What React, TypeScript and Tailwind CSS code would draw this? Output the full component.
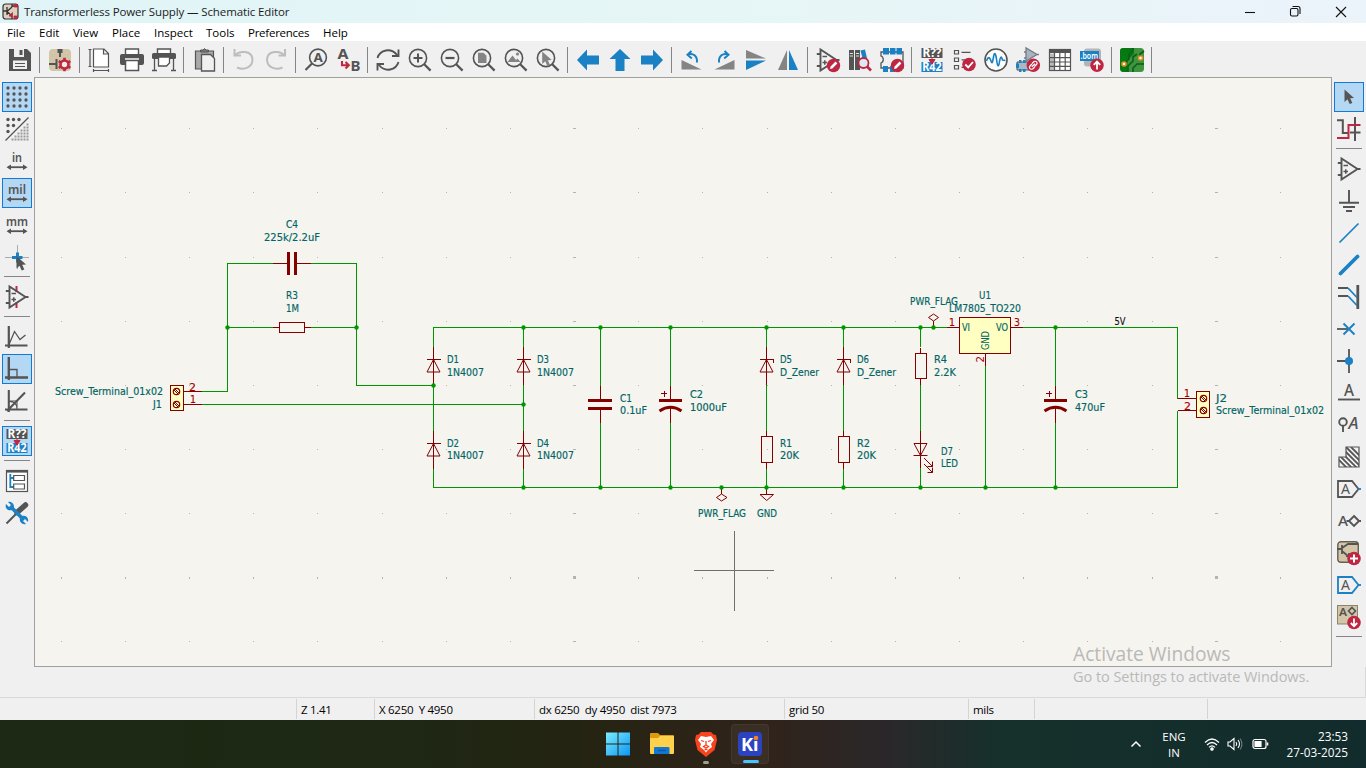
import type { ReactNode } from "react";

const K = "#545454";
const B = "#1a81c4";
const R = "#bf2641";
const G = "#848484";
const CREAM = "#d2c5a8";

const Svg = ({ children, size = 24 }: { children: ReactNode; size?: number }) => (
  <svg className="overflow-visible" width={size} height={size} viewBox="0 0 24 24" fill="none" stroke={K} strokeWidth="1.6">
    {children}
  </svg>
);

const Label = ({ x, y, s, w, fill = K, weight = 600, children }: { x: number; y: number; s: number; w: number; fill?: string; weight?: number; children: string }) => (
  <text x={x} y={y} fontSize={s} textLength={w} lengthAdjust="spacingAndGlyphs" fontWeight={weight} fontFamily="'Noto Sans', sans-serif" fill={fill} stroke="none">
    {children}
  </text>
);

const Lens = ({ children }: { children?: ReactNode }) => (
  <Svg>
    <circle cx="10" cy="10" r="8.6" />
    <path d="M16.2 16.2L22.6 22.6" strokeWidth="2.2" />
    {children}
  </Svg>
);

const OpAmp = () => (
  <>
    <path d="M4.5 1.5V22.5L20.5 12Z M0.8 6H4.5M0.8 18H4.5M20 12H23.5" strokeWidth="1.9" />
    <path d="M6.5 8.5H11M6.5 14.5H11M8.75 12.2V16.8" strokeWidth="1.5" />
  </>
);

const Pencil = () => (
  <>
    <circle cx="17.5" cy="17.5" r="6.7" fill={R} stroke="none" />
    <path d="M14 21L14.6 18.6L19.5 13.5L21.4 15.4L16.4 20.4Z" fill="#fff" stroke="none" />
  </>
);

const Annotate = () => (
  <Svg>
    <rect x="1.5" y="0" width="21" height="10" fill={K} stroke="none" />
    <rect x="1.5" y="14" width="21" height="10" fill={B} stroke="none" />
    <Label x={2.5} y={9} s={11.5} w={19} fill="#fff" weight={700}>R??</Label>
    <Label x={2.2} y={23.2} s={11.5} w={19.5} fill="#fff" weight={700}>R42</Label>
    <path d="M12 9V12M9 11.500H15L12 16.300Z" fill={R} stroke={R} strokeWidth="1" />
  </Svg>
);

const Cursor = ({ x = 0, y = 0, fill = K }: { x?: number; y?: number; fill?: string }) => (
  <path transform={`translate(${x} ${y})`} d="M0 0V12.5L3 9.8L5.2 14.6L7.8 13.5L5.7 8.8L9.500 8.600Z" fill={fill} stroke="none" />
);

const topIcons: (ReactNode | null)[] = [
  <Svg key="save">
    <path d="M1 1H19L23 5V23H1Z" fill={K} stroke="none" />
    <rect x="6" y="1" width="10" height="8" fill="#efefef" stroke="none" />
    <rect x="11.5" y="2" width="3" height="5" fill={K} stroke="none" />
    <path d="M5 12.5H19V21H5Z" fill="#efefef" stroke="none" />
    <path d="M7 15.5H17M7 18.5H17" strokeWidth="1.2" />
  </Svg>,
  null,
  <Svg key="setup">
    <rect x="1" y="1" width="22" height="22" rx="4" fill={CREAM} stroke="none" />
    <path d="M9.5 1H14.5V5H9.500Z" fill={K} stroke="none" />
    <path d="M12 4V9M1 16H8M8.500 11V21" strokeWidth="2" />
    <circle cx="16.500" cy="16.500" r="4" stroke={R} strokeWidth="2.600" fill="#f3ebe4" />
    <path d="M16.5 9.8V12.500M16.500 20.500V23.200M10.700 13.100L13 14.500M20 18.500L22.300 19.900M10.700 19.900L13 18.500M20 14.500L22.300 13.100" stroke={R} strokeWidth="2.600" />
  </Svg>,
  null,
  <Svg key="page">
    <path d="M5.500 1H16L20.500 5.500V19H5.500Z M15.500 1V6H20.500" fill="#fff" strokeWidth="1.200" />
    <path d="M2 1V19M0.500 1.500H3.500M0.500 18.500H3.500M5.500 22.500H20.500M5.500 21V24M20.500 21V24" strokeWidth="1.200" />
  </Svg>,
  <Svg key="print">
    <path d="M5.5 6V1H18.5V6" fill="#fff" strokeWidth="1.4" />
    <rect x="0" y="6" width="24" height="11" rx="2" fill={K} stroke="none" />
    <rect x="5.5" y="12.5" width="13" height="10" fill="#fff" strokeWidth="1.5" />
    <path d="M5 11H19" stroke="#efefef" />
  </Svg>,
  <Svg key="plot">
    <path d="M5.5 5V1H18.5V5" fill="#fff" strokeWidth="1.4" />
    <rect x="0" y="5" width="24" height="6" rx="1.5" fill={K} stroke="none" />
    <path d="M6.5 9H17.5V15L14.5 18H6.5Z" fill="#fff" strokeWidth="1.3" />
    <path d="M2.5 11V22M21.5 11V22M0 22.5H5M19 22.5H24" strokeWidth="1.3" />
  </Svg>,
  null,
  <Svg key="paste">
    <g transform="translate(1.500 0)">
      <path d="M2 3H20V21H2Z" fill="#a9a9a9" strokeWidth="1.2" />
      <path d="M7 4V2H9.5L11 .5L12.5 2H15V4Z" fill="#777" strokeWidth="1" />
      <path d="M8 6.5H17L21 10.5V23H8Z" fill="#f0f0f0" strokeWidth="1.3" />
    </g>
  </Svg>,
  null,
  <Svg key="undo"><path d="M2.500 1V7.500H9M3 7.500C7 2.500 20 2 20.500 11.500C20.500 18.500 13 23 5 19.500" stroke="#bdbdbd" strokeWidth="2" /></Svg>,
  <Svg key="redo"><path d="M21 1V7.500H14.500M20.500 7.500C16.500 2.500 3.500 2 3 11.500C3 18.500 10.500 23 18.500 19.500" stroke="#bdbdbd" strokeWidth="2" /></Svg>,
  null,
  <Svg key="find">
    <circle cx="14" cy="9.5" r="8.4" />
    <path d="M8 15.5L1.5 22" strokeWidth="2.2" />
    <Label x={9.4} y={14} s={12.5} w={9.3} weight={700}>A</Label>
  </Svg>,
  <Svg key="replace">
    <Label x={1.5} y={11} s={14.5} w={11} weight={700}>A</Label>
    <Label x={14.500} y={23} s={14.5} w={10} weight={700}>B</Label>
    <path d="M6 13V17.300H12M9.500 14L12.800 17.300L9.500 20.600" stroke={R} strokeWidth="2.100" />
  </Svg>,
  null,
  <Svg key="refresh"><path d="M1.5 10C4 1.5 15 -.5 21 7M22.5 1.5V8H16M22.5 14C20 22.5 9 24.5 3 17M1.5 22.5V16H8" strokeWidth="1.9" /></Svg>,
  <Lens key="zin"><path d="M5.5 10H14.5M10 5.5V14.5" strokeWidth="2" /></Lens>,
  <Lens key="zout"><path d="M5.5 10H14.5" strokeWidth="2.2" /></Lens>,
  <Lens key="zpage"><path d="M6 4.8H11.5L14.5 7.8V15H6Z" fill={G} stroke="none" /></Lens>,
  <Lens key="zobj"><path d="M3.5 14L8.5 7.5L12 12L13.5 10.5L16.5 14Z" fill={G} stroke="none" /><circle cx="13.5" cy="6" r="1.6" fill={G} stroke="none" /></Lens>,
  <Lens key="zsel"><Cursor x={6.2} y={3.500} fill={G} /></Lens>,
  null,
  <Svg key="left"><path d="M1 12L11 1.5V7.5H23V16.5H11V22.5Z" fill={B} stroke="none" /></Svg>,
  <Svg key="up"><path d="M12 1L22.5 11H16.5V23H7.5V11H1.5Z" fill={B} stroke="none" /></Svg>,
  <Svg key="right"><path d="M23 12L13 1.5V7.5H1V16.5H13V22.5Z" fill={B} stroke="none" /></Svg>,
  null,
  <Svg key="ccw"><path d="M1.500 12V21.500H21.500Z" fill={G} stroke="none" /><path d="M8 6.500C13 4.500 17.500 8 17 14.500M11.500 3L7.500 6.800L11.800 10.500" stroke={B} strokeWidth="2" /></Svg>,
  <Svg key="cw"><path d="M22.500 12V21.500H2.500Z" fill={G} stroke="none" /><path d="M16 6.500C11 4.500 6.500 8 7 14.500M12.500 3L16.500 6.800L12.200 10.500" stroke={B} strokeWidth="2" /></Svg>,
  <Svg key="mv"><path d="M2 2L22 10.5H2Z" fill={G} stroke="none" /><path d="M2 22L22 12.5H2Z" fill={B} stroke="none" /></Svg>,
  <Svg key="mh"><path d="M2 22H11V2Z" fill={G} stroke="none" /><path d="M22 22H13V2Z" fill={B} stroke="none" /></Svg>,
  null,
  <Svg key="symedit"><OpAmp /><Pencil /></Svg>,
  <Svg key="lib">
    <path d="M1 2H6V22H1ZM7 2H12V22H7Z" fill={K} stroke="none" />
    <path d="M1.8 5.5H5M1.8 8H5M8 5.5H11.2M8 8H11.2" stroke="#ddd" strokeWidth="1" />
    <path d="M12.5 2.5L17 1.5L21 19L17 20Z" fill={B} stroke="none" />
    <circle cx="15.5" cy="15" r="5" fill="#dce9f2" stroke={R} strokeWidth="1.8" />
    <path d="M19 18.5L23 22.5" stroke={R} strokeWidth="2.6" />
  </Svg>,
  <Svg key="fpedit">
    <path d="M1 4H23V20H1V15C4 14 4 9 1 8Z" strokeWidth="1.3" />
    <path d="M3 0H9V6.500H3ZM10 0H15.500V6.500H10ZM16.500 0H22V6.500H16.500ZM3 18H8V24H3ZM10 18H15V24H10Z" fill={B} stroke="none" />
    <Pencil />
  </Svg>,
  null,
  <Annotate key="ann" />,
  <Svg key="erc">
    <path d="M2.500 2.500H6.500V6H2.500ZM2.500 10H6.500V13.500H2.500ZM2.500 17.500H6.500V21H2.500ZM9.500 4.300H18.500M9.500 11.800H14M9.500 19.300H12" strokeWidth="1.2" />
    <circle cx="17" cy="16.500" r="6.800" fill={R} stroke="none" />
    <path d="M13.300 16.500L16.200 19.400L21 14" stroke="#fff" strokeWidth="1.8" />
  </Svg>,
  <Svg key="sim">
    <circle cx="12" cy="12" r="11" fill="#fff" />
    <path d="M2.500 13C4 8.500 5.500 8.500 7 13C8 16 8.500 15 9.500 9C10.500 3.500 11.500 5 12.500 11C13.500 19 14.500 20 15.500 13.500C16.500 8 17.500 8 18.500 12L21.500 12.500" stroke={B} strokeWidth="1.6" />
  </Svg>,
  <Svg key="assign">
    <path d="M10 0V13L21 6.5Z M8 4H10M8 10H10M20 6.5H23" fill="#a6b3c0" stroke="#747b82" strokeWidth="1.3" />
    <path d="M1 14H14V22H1Z" fill="#a9b7c6" strokeWidth="1" />
    <path d="M3 12H5.5V15H3ZM7 12H9.5V15H7ZM3 21H5.5V24H3ZM7 21H9.5V24H7ZM0 15.5H3V20H0Z" fill={B} stroke="none" />
    <circle cx="17.3" cy="17.3" r="6.7" fill={R} stroke="none" />
    <path d="M16 15.5L18 13.5C20.5 12.5 22 15 20.5 16.5L18.5 18.5M18.7 19L16.7 21C14 22 12.5 19.5 14 18L16 16M15.8 18.8L19 15.7" stroke="#fff" strokeWidth="1.2" />
  </Svg>,
  <Svg key="table">
    <rect x="1.5" y="1.5" width="21" height="21" fill="#fff" strokeWidth="1.2" />
    <path d="M1.5 1.5H22.5V5H1.5Z" fill={K} stroke="none" />
    <path d="M2 5.5H6V22H2Z" fill="#bbb" stroke="none" />
    <path d="M1.5 9.7H22.5M1.5 14H22.5M1.5 18.3H22.5M6.5 5V22M11.8 5V22M17.2 5V22" strokeWidth="1.2" />
  </Svg>,
  <Svg key="bom">
    <rect x="4" y="0.5" width="17" height="18" rx="3" fill="#b5b5b5" stroke="none" />
    <rect x="0" y="3" width="19" height="10" fill={B} stroke="none" />
    <Label x={0.5} y={11} s={9} w={17.5} fill="#fff">.bom</Label>
    <circle cx="17" cy="17.3" r="6.7" fill={R} stroke="none" />
    <path d="M17 21.5V14M13.8 16.8L17 13.5L20.2 16.8" stroke="#fff" strokeWidth="1.8" />
  </Svg>,
  null,
  <Svg key="pcb">
    <rect x="0" y="0" width="24" height="24" rx="3.5" fill="#3f9440" stroke="none" />
    <path d="M3.5 0H14V6L7.5 12V24H3.5C1 24 0 22 0 20V3C0 1 1 0 3.5 0Z" fill="#067a12" stroke="none" />
    <path d="M5 15L9 11V6L13 2V0M8 24V18L13 13V9L17 6M13 24V20L17 16H24M20 9V6L24 3" stroke="#0b5f16" strokeWidth="1.6" />
    <circle cx="4" cy="16" r="2" fill="#fff" stroke="#ef8d1c" strokeWidth="1.6" />
    <circle cx="20.5" cy="10" r="2" fill="#fff" stroke="#ef8d1c" strokeWidth="1.6" />
  </Svg>,
  null,
];

const dots = (xs: number[], ys: number[], r: number, keep: (x: number, y: number) => boolean = () => true) =>
  xs.flatMap((x) => ys.filter((y) => keep(x, y)).map((y) => <circle key={`${x}-${y}`} cx={x} cy={y} r={r} fill={K} stroke="none" />));

const Unit = ({ t, x, w }: { t: string; x: number; w: number }) => (
  <Svg>
    <Label x={x} y={13} s={13.2} w={w}>{t}</Label>
    <path d="M3 18.2H21" strokeWidth="1.8" />
    <path d="M1.5 18.2L6 15.400V21ZM22.5 18.200L18 15.400V21Z" fill={K} stroke="none" />
  </Svg>
);

type Side = { icon: ReactNode; on?: boolean } | null;

const leftIcons: Side[] = [
  { icon: <Svg>{dots([3, 9, 15, 21], [3, 9, 15, 21], 1.65)}</Svg>, on: true },
  {
    icon: (
      <Svg>
        {dots([3, 8.5, 14], [2.5, 8.5, 14.5], 1.7, (x, y) => x + y < 20)}
        <path d="M.5 23.5L23.5 .5" strokeWidth="1.2" />
        {[0, 1, 2, 3, 4, 5].flatMap((r) => [0, 1, 2, 3, 4, 5].filter((c) => c + r > 4).map((c) => <rect key={`${r}${c}`} x={6.5 + c * 3} y={6.5 + r * 3} width="2" height="2" fill="#9a9a9a" stroke="none" />))}
      </Svg>
    ),
  },
  { icon: <Unit t="in" x={7} w={10} /> },
  { icon: <Unit t="mil" x={3} w={18} />, on: true },
  { icon: <Unit t="mm" x={1} w={22} /> },
  {
    icon: (
      <Svg>
        <path d="M0 12.5H24M12.500 0V24" stroke="#aaa" strokeWidth="1" />
        <path d="M7 12.500H17.500M12.500 7.500V17.500" stroke={B} strokeWidth="3" />
        <Cursor x={11.5} y={11} />
      </Svg>
    ),
  },
  null,
  { icon: <Svg><path d="M11.5 1V7M11.5 17V23" stroke={R} strokeWidth="2" /><OpAmp /></Svg> },
  null,
  { icon: <Svg><path d="M3.8 1V23M0 20.5H22.5" strokeWidth="2.2" /><path d="M3.8 20L9.5 6.5L15 14.5L20.5 10" strokeWidth="1.3" /></Svg> },
  { icon: <Svg><path d="M3.8 0V23M0 20.5H23" strokeWidth="2.4" /><path d="M4 12.5H12V20" strokeWidth="1.3" /></Svg>, on: true },
  { icon: <Svg><path d="M3.8 1V23M0 20.5H22.5M2 22L20 3.5" strokeWidth="2.1" /><path d="M4 12.5C9 12.5 12 15 12 20M4 12H12V20" strokeWidth="1.1" /></Svg> },
  null,
  { icon: <Annotate />, on: true },
  null,
  {
    icon: (
      <Svg>
        <rect x="1.5" y="1.5" width="21" height="21" fill="#fff" strokeWidth="1.2" />
        <path d="M1.5 2.5H22.5" strokeWidth="2.2" />
        <path d="M5.3 5V18H9M5.3 9H9" stroke={B} strokeWidth="1.8" />
        <path d="M8.7 6.5H19.5V11.5H8.7ZM8.7 15H19.5V20H8.7Z" strokeWidth="1.2" />
      </Svg>
    ),
  },
  {
    icon: (
      <Svg>
        <path d="M1.500 22.500L12 12" strokeWidth="2" />
        <path d="M12 11.500L20.500 4" strokeWidth="5.500" strokeLinecap="round" />
        <path d="M5 5L19 19" stroke={B} strokeWidth="3.600" />
        <path d="M3 1L6.5 4.5L4.5 6.5L1 3C-.5 7 3 10.5 7 9L9 7C9.5 3 6.5 0 3 1ZM15 17L17 15C21 14 24 17 23 21L19.5 17.5L17.5 19.5L21 23C17 24 14 21 15 17Z" fill={B} stroke="none" />
      </Svg>
    ),
  },
];

const rightIcons: Side[] = [
  { icon: <Svg><Cursor x={7.5} y={4.500} /></Svg>, on: true },
  { icon: <Svg><path d="M0 3.2H5.8V16H12M18 0V24M13 15.5H23.5" strokeWidth="2" /><path d="M0 21H11.5V8H23.5" stroke={R} strokeWidth="2" /></Svg> },
  null,
  { icon: <Svg><OpAmp /></Svg> },
  { icon: <Svg><path d="M12 1V14M2 13.8H22M6 18H18M9 22H15" strokeWidth="1.9" /></Svg> },
  { icon: <Svg><path d="M2.5 21.5L21.5 2.5" stroke={B} strokeWidth="1.7" /></Svg> },
  { icon: <Svg><path d="M3.5 20.5L20.5 3.5" stroke={B} strokeWidth="3.8" strokeLinecap="round" /></Svg> },
  { icon: <Svg><path d="M1 3H11M1 11H11" strokeWidth="1.9" /><path d="M20.8 0V24" strokeWidth="2.8" /><path d="M11 3L20 12.5M11 11L20 20.5" stroke={B} strokeWidth="1.8" /></Svg> },
  { icon: <Svg><path d="M0 12H12" strokeWidth="1.8" /><path d="M6.5 6.5L17.5 17.5M6.5 17.5L17.5 6.5" stroke={B} strokeWidth="1.9" /></Svg> },
  { icon: <Svg><path d="M0 12H12M12 0V24" strokeWidth="1.8" /><circle cx="12" cy="12" r="4" fill={B} stroke="none" /></Svg> },
  { icon: <Svg><Label x={7} y={14.500} s={15.5} w={10} weight={500}>A</Label><path d="M1 18.500H23" strokeWidth="1.9" /></Svg> },
  {
    icon: (
      <Svg>
        <circle cx="6" cy="9" r="3.800" strokeWidth="1.9" />
        <path d="M6 13V19" strokeWidth="1.9" />
        <text x="11.500" y="16" fontSize="15.5" textLength="10" lengthAdjust="spacingAndGlyphs" fontStyle="italic" fontWeight="500" fontFamily="'Noto Sans', sans-serif" fill={K} stroke="none">A</text>
      </Svg>
    ),
  },
  {
    icon: (
      <Svg>
        <clipPath id="stairs"><path d="M9 2H22V22H2V12H9Z" /></clipPath>
        <g clipPath="url(#stairs)"><path d="M-6 2L20 28M-1 2L25 28M4 2L30 28M9 2L35 28M14 2L40 28M-11 2L15 28" strokeWidth="1.8" /></g>
        <path d="M9 2H22V22H2V12H9Z" strokeWidth="1.2" />
      </Svg>
    ),
  },
  { icon: <Svg><path d="M1 4H15L21.5 12L15 20H1Z" strokeWidth="1.8" /><path d="M21 12H24" stroke={B} strokeWidth="1.8" /><Label x={4} y={17} s={13.5} w={9} weight={400}>A</Label></Svg> },
  { icon: <Svg><Label x={1} y={17} s={13.5} w={10} weight={500}>A</Label><path d="M17 7L22 12L17 17L12 12ZM9.500 12H12M22 12H24" strokeWidth="1.9" /></Svg> },
  {
    icon: (
      <Svg>
        <rect x="0.8" y="0.8" width="20.5" height="20.5" rx="3" fill={CREAM} stroke="#645f52" strokeWidth="1.4" />
        <path d="M0 8H5M5 4V13M5 7L11 3H21M5 10L11 15M9 15H12V12" strokeWidth="1.8" />
        <circle cx="17" cy="17.5" r="6.8" fill={R} stroke="none" />
        <path d="M17 13.5V21.5M13 17.5H21" stroke="#fff" strokeWidth="2" />
      </Svg>
    ),
  },
  { icon: <Svg><path d="M1 4H15L21.5 12L15 20H1Z" stroke={B} strokeWidth="1.8" /><path d="M21 12H24" stroke={B} strokeWidth="1.8" /><Label x={4} y={17} s={13.5} w={9} weight={400}>A</Label></Svg> },
  {
    icon: (
      <Svg>
        <rect x="0.5" y="0.5" width="20" height="18.5" fill={CREAM} stroke="#8a8370" strokeWidth="1" />
        <Label x={2} y={10.5} s={11.5} w={8}>A</Label>
        <path d="M15 2.5L18.5 6L15 9.5L11.5 6Z" strokeWidth="1.6" />
        <circle cx="17" cy="17.5" r="6.8" fill={R} stroke="none" />
        <path d="M17 13.5V21M13.8 18L17 21.2L20.2 18" stroke="#fff" strokeWidth="1.8" />
      </Svg>
    ),
  },
  null,
];

const SideBar = ({ items }: { items: Side[] }) => (
  <div className="flex w-8 flex-col items-center pt-1">
    {items.map((it, i) =>
      it ? (
        <div key={i} className="flex h-8 w-8 items-center justify-center">
          <div className={it.on ? "flex h-[30px] w-[30px] items-center justify-center border border-[#0f7bd8] bg-[#b4d7f3]" : "flex"}>{it.icon}</div>
        </div>
      ) : (
        <div key={i} className="h-2 pt-[3px]">
          <div className="h-px w-[26px] bg-[#858585]" />
        </div>
      ),
    )}
  </div>
);

/* Schematic primitives, in sheet coordinates */
type Lbl = [string, number, number, number];
const labels: Lbl[] = [
  ["C4", 286, 228, 12], ["225k/2.2uF", 264, 241, 56], ["R3", 286, 299, 12], ["1M", 286, 311.5, 13],
  ["Screw_Terminal_01x02", 55, 395, 108], ["J1", 153, 408, 9],
  ["D1", 447, 363, 12], ["1N4007", 447, 376, 37], ["D2", 447, 446.5, 12], ["1N4007", 447, 459, 37],
  ["D3", 537, 363, 12], ["1N4007", 537, 376, 37], ["D4", 537, 446.5, 12], ["1N4007", 537, 459, 37],
  ["C1", 620, 402, 12], ["0.1uF", 620, 414, 27], ["C2", 690, 398, 13], ["1000uF", 690, 411, 37],
  ["PWR_FLAG", 698, 517, 48], ["GND", 757, 517, 20],
  ["D5", 780, 363, 12], ["D_Zener", 780, 376, 39], ["D6", 857, 363, 12], ["D_Zener", 857, 376, 39],
  ["R1", 780, 447, 12], ["20K", 780, 459, 19], ["R2", 857, 447, 13], ["20K", 857, 459, 19],
  ["R4", 934, 363, 13], ["2.2K", 934, 376, 22], ["D7", 941, 455, 12], ["LED", 941, 467, 17],
  ["PWR_FLAG", 910, 305, 48], ["U1", 979, 299, 12], ["LM7805_TO220", 949, 312, 72],
  ["C3", 1075, 398, 13], ["470uF", 1075, 411, 30], ["J2", 1216, 402, 11], ["Screw_Terminal_01x02", 1216, 414, 108],
  ["VI", 962, 331, 8], ["VO", 996, 331, 12],
];

const pins: Lbl[] = [
  ["2", 189, 391, 7], ["1", 190, 403, 6], ["1", 949, 326, 6], ["3", 1014, 326, 6], ["1", 1184, 397, 6], ["2", 1184, 410, 7],
];

const junctions: [number, number][] = [
  [227.5, 327.5], [356.5, 327.5], [433.5, 385.5], [523.5, 327.5], [523.5, 404.5], [523.5, 487.5], [600.5, 327.5], [600.5, 487.5],
  [670.5, 327.5], [670.5, 487.5], [766.5, 327.5], [766.5, 487.5], [843.5, 327.5], [843.5, 487.5], [920.5, 327.5], [920.5, 487.5],
  [933.5, 327.5], [985.5, 487.5], [1055.5, 327.5], [1055.5, 487.5], [721.5, 487.5],
];

const Text = ({ t: [s, x, y, w], fill }: { t: Lbl; fill: string }) => (
  <text x={x} y={y} fontSize="9.6" textLength={w} lengthAdjust="spacingAndGlyphs" fill={fill} stroke={fill} strokeWidth="0.15">{s}</text>
);

const Diode = ({ x, y, zener }: { x: number; y: number; zener?: boolean }) => (
  <>
    <path d={`M${x} ${y - 12.5}V${y + 25}M${x - 7} ${y}H${x + 7}${zener ? "V" + (y + 3) : ""}`} shapeRendering="crispEdges" />
    <path d={`M${x} ${y}L${x + 6.5} ${y + 12.5}H${x - 6.5}Z`} />
  </>
);

const Resistor = ({ x, y, h = 26 }: { x: number; y: number; h?: number }) => (
  <g shapeRendering="crispEdges">
    <path d={`M${x} ${y - 6}V${y}M${x} ${y + h}V${y + h + 6}`} />
    <rect x={x - 5} y={y} width="11" height={h} />
  </g>
);

const Polarized = ({ x }: { x: number }) => (
  <>
    <path d={`M${x} 386V400M${x} 408V423M${x - 9.5} 393.5H${x - 3.5}M${x - 6.5} 390.5V396.5`} shapeRendering="crispEdges" />
    <path d={`M${x - 11.5} 400.5H${x + 11.5}`} strokeWidth="3" />
    <path d={`M${x - 11} 411Q${x} 403.5 ${x + 11} 411`} strokeWidth="3" />
  </>
);

const Screw = ({ x, y }: { x: number; y: number }) => (
  <>
    <circle cx={x} cy={y} r="3.2" strokeWidth="1.2" />
    <path d={`M${x - 2.5} ${y - 1.5}L${x + 1.5} ${y + 2.5}M${x - 1.5} ${y - 2.5}L${x + 2.5} ${y + 1.5}`} />
  </>
);

const gridX = Array.from({ length: 20 }, (_, i) => Math.floor(61.2 + i * 64.17));
const gridY = [128, 192, 257, 321, 385, 449, 513, 577, 641];

const Schematic = () => (
  <svg width="1296" height="588" viewBox="35 78 1296 588" fill="none" fontFamily="'DejaVu Sans', sans-serif">
    {gridX.flatMap((x, i) =>
      gridY.map((y) => {
        const major = i % 10 === 8;
        return <rect key={`${x}-${y}`} x={major ? x - 1 : x} y={major && y === 577 ? 576 : y} width={major ? 3 : 1} height={y !== 577 ? 1 : major ? 3 : 2} fill="#b3b3b0" />;
      }),
    )}
    <path
      stroke="#009600"
      shapeRendering="crispEdges"
      d="M202 391.5H227.5V263.5H273M311 263.5H356.5V385.5H433.5M227.5 327.5H273M311 327.5H356.5M202 404.5H523.5
      M433.5 347V327.5H947M433.5 385V431M433.5 468V487.5H1177.5V410.5M523.5 327V347M523.5 385V431M523.5 468V487
      M600.5 327V386M600.5 423V487M670.5 327V386M670.5 423V487M766.5 327V347M766.5 385V431M766.5 468V487
      M843.5 327V347M843.5 385V431M843.5 468V487M920.5 327V347M920.5 385V431M920.5 468V487
      M985.5 366V487M1023 327.5H1177.5V398.5M1055.5 327V386M1055.5 423V487"
    />
    <g stroke="#840000">
      <g shapeRendering="crispEdges">
        <path d="M273 263.5H288M297 263.5H311M273 327.5H279M305 327.5H311M184 391.5H202M184 404.5H202M600.5 386V400M600.5 409V423M947 327.5H959M1011 327.5H1023M985.5 354V366M1178 398.5H1196M1178 410.5H1196M933.5 327V321M721.5 488V494M766.5 488V494" />
        <rect x="279.5" y="322.5" width="25" height="10" />
        <g fill="#ffffc2">
          <rect x="170.5" y="385.5" width="13" height="25" />
          <rect x="959.5" y="317.5" width="51" height="36" />
          <rect x="1196.5" y="391.5" width="13" height="26" />
        </g>
        <path d="M288.5 252V275M295.5 252V275M588 400.5H612M588 408.5H612" strokeWidth="3" />
      </g>
      <Diode x={433.5} y={359.5} />
      <Diode x={433.5} y={443.5} />
      <Diode x={523.5} y={359.5} />
      <Diode x={523.5} y={443.5} />
      <Diode x={766.5} y={359.5} zener />
      <Diode x={843.5} y={359.5} zener />
      <Resistor x={766.5} y={436.5} />
      <Resistor x={843.5} y={436.5} />
      <Resistor x={920.5} y={353.5} h={25} />
      <Polarized x={670.5} />
      <Polarized x={1055.5} />
      <path d="M920.5 431V468M913.5 455.5H927.5M920.5 455.5L914 443.5H927Z" />
      <path d="M924 458L932.5 466.5M932.5 461.5V466.5H927.5M924 464L932.5 472.5M932.5 467.5V472.5H927.5" />
      <path d="M933.5 314L938.5 317.5L933.5 321L928.5 317.5ZM721.5 494L727 497.5L721.5 501L716.5 497.5ZM760 494.5H773.5L766.7 500.5Z" />
      <Screw x={176.5} y={391.5} />
      <Screw x={176.5} y={404.5} />
      <Screw x={1203.5} y={398.5} />
      <Screw x={1203.5} y={410.5} />
    </g>
    {junctions.map(([x, y]) => <circle key={`${x}-${y}`} cx={x} cy={y} r="2.2" fill="#009600" />)}
    {labels.map((t, i) => <Text key={i} t={t} fill="#006464" />)}
    {pins.map((t, i) => <Text key={i} t={t} fill="#a90000" />)}
    <Text t={["5V", 1114.5, 325, 11]} fill="#0f0f0f" />
    <text transform="translate(989 350) rotate(-90)" fontSize="10" textLength="19" lengthAdjust="spacingAndGlyphs" fill="#006464">GND</text>
    <text transform="translate(984 362.5) rotate(-90)" fontSize="10" textLength="6.5" lengthAdjust="spacingAndGlyphs" fill="#a90000">2</text>
    <path d="M694 570.5H774M734.5 531V611" stroke="#6f6f6c" shapeRendering="crispEdges" />
  </svg>
);

const Cell = ({ w, children }: { w: string; children?: ReactNode }) => (
  <div className={`${w} h-5 shrink-0 whitespace-pre border-l border-[#d4d4d4] pl-1 leading-[22px]`}>{children}</div>
);

export default function App() {
  return (
    <div className="relative flex h-[768px] w-[1366px] flex-col overflow-hidden bg-[#f0f0f0] font-['Open_Sans','Noto_Sans',sans-serif] text-black">
      <header className="flex h-[23px] shrink-0 items-center bg-linear-to-r from-[#e0f4f7] via-[#e6f6f6] to-[#ebf3fb] pl-0.5">
        <svg width="17" height="17" viewBox="0 0 17 17" fill="none" stroke="#333">
          <rect x="1" y="1" width="15" height="15" rx="2.5" fill="#ddd0bd" strokeWidth="1.2" />
          <path d="M1 8H5M5 4V12M5.5 8L10 4M5.5 9L10 13M10 4V1M10 13V16M10 3H16" strokeWidth="1.3" />
          <path d="M7 13L10.5 9.5V13.5ZM12 1.5H15.5V4H12ZM12 13H15.5V15.5H12Z" fill={R} stroke={R} strokeWidth=".8" />
        </svg>
        <span className="ml-[5px] w-[800px] text-[11.5px] tracking-[-0.12px] text-[#1c1c1c]">Transformerless Power Supply — Schematic Editor</span>
        <div className="flex flex-1 justify-end">
          <svg width="122" height="22" viewBox="0 0 122 22" fill="none" stroke="#111" strokeWidth="1.1">
            <path d="M1 11.500H11" />
            <rect x="46.500" y="7.500" width="7.500" height="7.500" rx="1.500" />
            <path d="M48.500 5.500H54Q56 5.500 56 7.500V13" />
            <path d="M92 6L102 16M102 6L92 16" />
          </svg>
        </div>
      </header>

      <nav className="flex h-[18px] shrink-0 items-center bg-white pt-0.5 text-[11.5px]">
        <span className="ml-[7px] w-8">File</span>
        <span className="w-[34px]">Edit</span>
        <span className="w-[39px]">View</span>
        <span className="w-[42px]">Place</span>
        <span className="w-[52px]">Inspect</span>
        <span className="w-[42px]">Tools</span>
        <span className="w-[75px] tracking-[-0.25px]">Preferences</span>
        <span>Help</span>
      </nav>

      <div className="flex h-9 shrink-0 items-center pl-1 pt-0.5">
        {topIcons.map((icon, i) =>
          icon ? (
            <div key={i} className="flex w-8 shrink-0 justify-center">{icon}</div>
          ) : (
            <div key={i} className="w-2 shrink-0 pl-[3px]">
              <div className="h-[26px] w-px bg-[#858585]" />
            </div>
          ),
        )}
      </div>

      <div className="flex h-[590px] shrink-0">
        <div className="flex w-[34px] justify-center"><SideBar items={leftIcons} /></div>
        <main className="w-[1298px] shrink-0 border border-[#a0a0a0] bg-[#f5f4ef]"><Schematic /></main>
        <div className="flex w-[34px] justify-center"><SideBar items={rightIcons} /></div>
      </div>

      <div className="h-[31px] shrink-0 border-b border-r border-[#d9d9d9]" />
      <div className="flex h-[22px] shrink-0 items-center pl-[296px] text-[11.5px] tracking-[-0.28px]">
        <Cell w="w-[78px]">Z 1.41</Cell>
        <Cell w="w-[160px]">X 6250  Y 4950</Cell>
        <Cell w="w-[250px]">dx 6250  dy 4950  dist 7973</Cell>
        <Cell w="w-[184px]">grid 50</Cell>
        <Cell w="w-[66px]">mils</Cell>
        <Cell w="w-[173px]" />
        <Cell w="w-[158px]" />
      </div>

      <footer className="flex h-12 flex-1 items-center bg-[linear-gradient(90deg,#1d2914_0%,#1e2814_30%,#242412_42%,#30231a_56%,#2a272a_65%,#16302b_73%,#122c2d_100%)] text-white">
        <div className="ml-[598px] flex items-center">
          <div className="flex w-10 justify-center">
            <svg width="24" height="24" viewBox="0 0 24 24">
              <defs><linearGradient id="win" x2="1" y2="1"><stop stopColor="#7cecfd" /><stop offset="1" stopColor="#0b96f5" /></linearGradient></defs>
              <path d="M0 .5H11.5V11.5H0ZM12.5 .5H24V11.5H12.5ZM0 12.5H11.5V23.5H0ZM12.5 12.5H24V23.5H12.5Z" fill="url(#win)" />
            </svg>
          </div>
          <div className="flex w-12 justify-center">
            <svg width="24" height="24" viewBox="0 0 24 24">
              <path d="M0 2Q0 1 1 1H8L10 3H23Q24 3 24 4V10H0Z" fill="#dd9a0c" />
              <path d="M0 6H8L10 4H24V21Q24 22 23 22H1Q0 22 0 21Z" fill="#ffd04c" />
              <path d="M4 22V16Q4 15 5 15H18Q19.5 15 19.5 16V22Z" fill="#1278cf" />
              <path d="M8 18.5H16" stroke="#0b58a8" strokeWidth="1.3" />
            </svg>
          </div>
          <div className="relative flex w-10 justify-center">
            <svg width="22" height="25" viewBox="0 0 22 25">
              <path d="M6 0H16L18.5 2.5L21 3L22 8L19.5 18L11 25L2.5 18L0 8L1 3L3.5 2.5Z" fill="#f8431c" />
              <path d="M6 4L11 5L16 4L19 8L16 12L17 15L13 18L11 20.5L9 18L5 15L6 12L3 8Z" fill="#fff" />
              <path d="M6 8.5L9 9.5M16 8.5L13 9.5M11 9V13L8.5 14.5L11 16L13.5 14.5L11 13M9.5 17.5H12.5" stroke="#f8431c" strokeWidth="1.3" fill="none" />
            </svg>
            <div className="absolute -bottom-[7px] left-[17px] h-[3px] w-1.5 rounded-full bg-[#a09c98]" />
          </div>
          <div className="relative ml-[5px] flex h-10 w-[38px] items-center justify-center rounded border border-white/5 bg-white/5">
            <svg className="overflow-visible" width="24" height="24" viewBox="0 0 24 24">
              <rect width="24" height="24" rx="4" fill="#2b43c0" />
              <text x="3" y="18.5" fontSize="18" fontWeight="700" textLength="17.5" lengthAdjust="spacingAndGlyphs" fontFamily="'Noto Sans', sans-serif" fill="#fff">Ki</text>
              <circle cx="18" cy="6" r="2.3" fill="#f58220" />
            </svg>
            <div className="absolute bottom-0 left-[11px] h-[3px] w-4 rounded-full bg-[#4cc2ff]" />
          </div>
        </div>
        <div className="ml-auto mr-[18px] flex items-center text-[11.5px] leading-4">
          <svg width="12" height="8" viewBox="0 0 12 8" fill="none" stroke="#fff" strokeWidth="1.5"><path d="M1.5 6.5L6 2L10.5 6.5" /></svg>
          <div className="ml-[18px] w-7 pt-px text-center"><div>ENG</div><div>IN</div></div>
          <svg className="ml-4" width="16" height="16" viewBox="0 0 16 16" fill="none" stroke="#fff" strokeWidth="1.2">
            <path d="M1 6.5Q8 -.5 15 6.5M3 9Q8 4 13 9M5 11.3Q8 8.3 11 11.3" /><circle cx="8" cy="13" r="1.2" fill="#fff" />
          </svg>
          <svg className="ml-[7px]" width="16" height="16" viewBox="0 0 16 16" fill="none" stroke="#fff" strokeWidth="1.1">
            <path d="M1 6H3L7 2.5V13.5L3 10H1ZM9 6Q10.5 8 9 10M11 4Q14 8 11 12" /><path d="M13 2.5Q17 8 13 13.5" stroke="#6d7f7f" />
          </svg>
          <svg className="ml-[9px]" width="17" height="12" viewBox="0 0 17 12" fill="none" stroke="#fff" strokeWidth="1.2">
            <rect x="1" y="1.5" width="13" height="9" rx="2" /><path d="M3 3.5H9V8.5H3Z" fill="#fff" /><path d="M15.5 4.5V7.5" strokeWidth="1.6" />
          </svg>
          <div className="ml-4 w-[63px] whitespace-nowrap text-right text-[11.8px]"><div>23:53</div><div>27-03-2025</div></div>
        </div>
      </footer>

      <div className="pointer-events-none absolute left-[1073px] top-[641px] whitespace-nowrap text-[#b9b9b7]">
        <div className="text-[19.2px] leading-[26px]">Activate Windows</div>
        <div className="text-[14.5px] leading-5 tracking-[-0.04px]">Go to Settings to activate Windows.</div>
      </div>
    </div>
  );
}
